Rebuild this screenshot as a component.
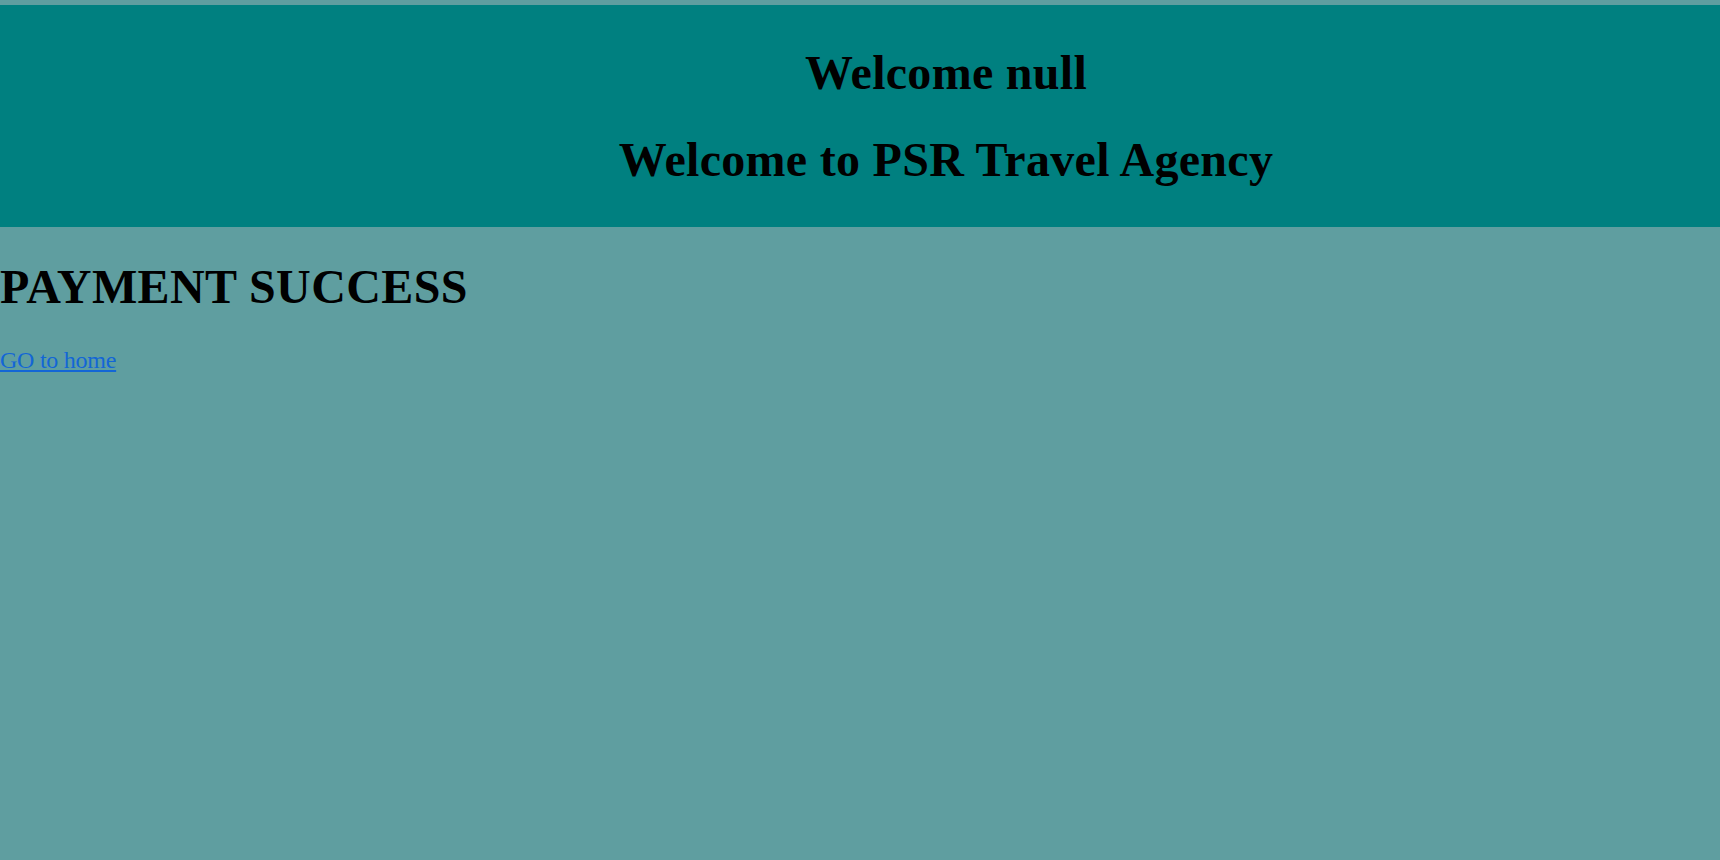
import React from "react";

export default function App() {
  return (
    <div
      className="min-h-[860px] w-full bg-[#5F9EA0] pt-[5px] text-black"
      style={{ fontFamily: '"Liberation Serif", "Times New Roman", serif' }}
    >
      <div className="bg-[#008080] py-[8px] pl-[172px] text-center">
        <h1 className="my-[32px] text-[48px] font-bold leading-[55px] tracking-[0.3px]">Welcome null</h1>
        <h1 className="my-[32px] text-[48px] font-bold leading-[55px] tracking-[0.3px]">Welcome to PSR Travel Agency</h1>
      </div>
      <h1 className="my-[32px] text-[48px] font-bold leading-[55px] tracking-[0.4px]">PAYMENT SUCCESS</h1>
      <a href="#" className="text-[24px] leading-[28px] tracking-[-0.25px] text-[#1366d6] underline">
        GO to home
      </a>
    </div>
  );
}
